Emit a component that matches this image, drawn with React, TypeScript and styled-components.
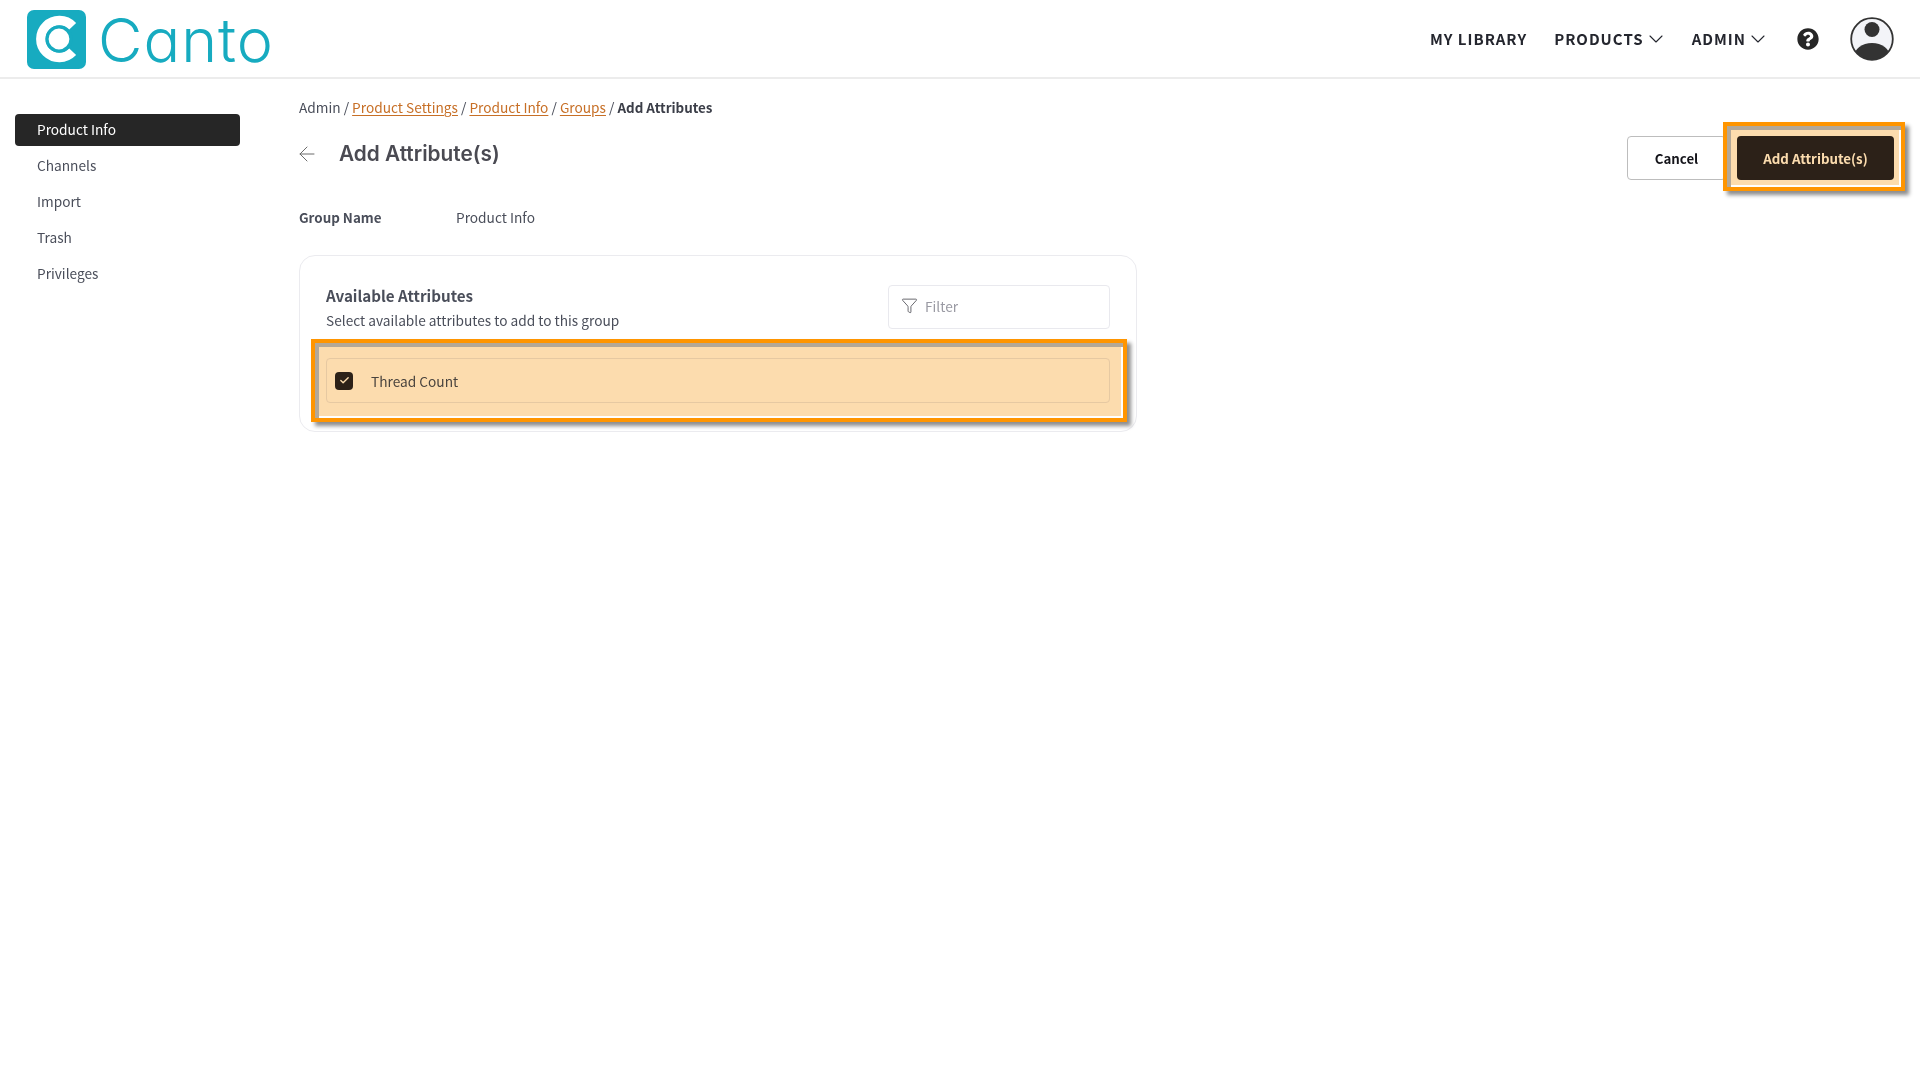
import React from 'react';
import styled, { createGlobalStyle } from 'styled-components';
import { ArrowLeft, Check, ChevronDown, Funnel } from 'lucide-react';
import { FaQuestionCircle } from 'react-icons/fa';

const GlobalStyle = createGlobalStyle`
  html, body {
    margin: 0;
    padding: 0;
    background: #ffffff;
  }
  body {
    font-family: "Noto Sans CJK JP", "Noto Sans", sans-serif;
    color: #4a4e5a;
  }
  * {
    box-sizing: border-box;
  }
`;

const Page = styled.div`
  width: 1920px;
  height: 1080px;
  overflow: hidden;
  display: flex;
  flex-direction: column;
`;

const TopBar = styled.header`
  height: 79px;
  flex-shrink: 0;
  display: flex;
  align-items: center;
  justify-content: space-between;
  padding: 0 26px 0 27px;
  border-bottom: 2px solid #ececec;
`;

const LogoLink = styled.a`
  display: flex;
  align-items: center;
  gap: 12px;
  padding-top: 2px;
  text-decoration: none;
`;

const Wordmark = styled.span`
  font-family: Inter, sans-serif;
  font-weight: 300;
  font-size: 61px;
  line-height: 60px;
  letter-spacing: 1px;
  font-feature-settings: "cv11";
  color: #17abc0;
`;

const TopNav = styled.nav`
  display: flex;
  align-items: center;
`;

const NavItem = styled.a<{ $gap: number }>`
  display: flex;
  align-items: center;
  margin-right: ${(p) => p.$gap}px;
  font-size: 15px;
  line-height: 24px;
  font-weight: 600;
  letter-spacing: 1px;
  color: #24262e;
  cursor: pointer;
`;

const HelpButton = styled.span`
  display: flex;
  font-size: 22px;
  color: #262626;
  margin-right: 31px;
`;

const Content = styled.div`
  flex: 1;
  display: flex;
`;

const Sidebar = styled.aside`
  width: 299px;
  flex-shrink: 0;
  padding: 35px 59px 0 15px;
  display: flex;
  flex-direction: column;
  gap: 4px;
`;

const SideItem = styled.a<{ $active?: boolean }>`
  height: 32px;
  display: flex;
  align-items: center;
  padding: 0 0 2px 22px;
  border-radius: 4px;
  font-size: 13.7px;
  line-height: 20px;
  background: ${(p) => (p.$active ? '#262626' : 'transparent')};
  color: ${(p) => (p.$active ? '#ffffff' : '#4a4e5a')};
  cursor: pointer;
`;

const Main = styled.main`
  flex: 1;
  padding: 17px 26px 0 0;
`;

const Breadcrumb = styled.div`
  font-size: 13.7px;
  line-height: 22px;
  color: #4a4e5a;

  a {
    color: #c76f26;
    text-decoration: underline;
    text-underline-offset: 2px;
    text-decoration-thickness: 1px;
  }

  strong {
    font-weight: 600;
    font-size: 13.4px;
    color: #3b3e48;
  }
`;

const TitleRow = styled.div`
  height: 70px;
  margin-top: 16px;
  display: flex;
  align-items: flex-start;
  justify-content: space-between;
`;

const TitleGroup = styled.div`
  display: flex;
  align-items: center;
  height: 40px;
  gap: 20px;
  margin-left: -4px;
  color: #6b6b6b;
`;

const Title = styled.h1`
  margin: 0;
  font-family: Inter, sans-serif;
  font-size: 20.8px;
  line-height: 30px;
  font-weight: 600;
  color: #4a4a52;
`;

const Actions = styled.div`
  display: flex;
  gap: 11px;
  margin-top: 2px;
`;

const BaseButton = styled.button`
  height: 44px;
  border-radius: 4px;
  font-family: inherit;
  font-size: 13.3px;
  font-weight: 600;
  cursor: pointer;
`;

const CancelButton = styled(BaseButton)`
  width: 99px;
  background: #ffffff;
  border: 1px solid #bdbdbd;
  color: #14141a;
`;

const AddButton = styled(BaseButton)`
  width: 157px;
  background: #2c2622;
  border: none;
  color: #ffffff;
`;

const Highlighted = styled.div`
  position: relative;
`;

/* the orange tutorial callout that sits on top of a control */
const Callout = styled.div<{ $l: number; $t: number; $r: number; $b: number }>`
  position: absolute;
  left: ${(p) => p.$l}px;
  top: ${(p) => p.$t}px;
  right: ${(p) => p.$r}px;
  bottom: ${(p) => p.$b}px;
  border: 4px solid #ff9500;
  box-shadow: 4px 4px 4px rgba(0, 0, 0, 0.45);
  pointer-events: none;

  &::before {
    content: '';
    position: absolute;
    inset: 0;
    background: #fcdcae;
    mix-blend-mode: multiply;
    border-style: solid;
    border-width: 4px 0 0 4px;
    border-color: #b3a898;
    box-shadow: inset -2px -2px 0 #ffffff;
  }
`;

const GroupRow = styled.div`
  display: flex;
  align-items: center;
  height: 26px;
  font-size: 13.7px;
  line-height: 22px;
`;

const GroupLabel = styled.span`
  width: 157px;
  font-size: 13.4px;
  font-weight: 600;
  color: #4a4e5a;
`;

const Card = styled.section`
  width: 838px;
  height: 177px;
  margin-top: 25px;
  padding: 26px 26px 0 26px;
  border: 1px solid #ebebef;
  border-radius: 16px;
`;

const CardHead = styled.div`
  display: flex;
  justify-content: space-between;
  height: 76px;
`;

const CardTitle = styled.h2`
  margin: 0;
  font-size: 15.2px;
  line-height: 27px;
  font-weight: 600;
  color: #4a4e5a;
`;

const CardSub = styled.p`
  margin: 0;
  font-size: 13.7px;
  line-height: 22px;
  color: #4a4e5a;
`;

const FilterBox = styled.label`
  width: 222px;
  height: 44px;
  margin-top: 3px;
  display: flex;
  align-items: center;
  gap: 7px;
  padding: 0 0 3px 12px;
  border: 1px solid #e9e9ee;
  border-radius: 4px;
  color: #55555c;
`;

const FilterInput = styled.input`
  flex: 1;
  min-width: 0;
  border: none;
  outline: none;
  padding: 0;
  background: transparent;
  font-family: inherit;
  font-size: 13.7px;
  color: #4a4e5a;

  &::placeholder {
    color: #9a9aa3;
  }
`;

const AttributeRow = styled.div`
  height: 45px;
  display: flex;
  align-items: center;
  gap: 18px;
  padding-left: 8px;
  border: 1px solid #e9e9ee;
  border-radius: 4px;
  font-size: 13.7px;
  color: #4a4e5a;
`;

const CheckBox = styled.span`
  width: 18px;
  height: 18px;
  display: flex;
  align-items: center;
  justify-content: center;
  border-radius: 4px;
  background: #2c2622;
  color: #ffffff;
`;

const CantoMark = () => (
  <svg width="59" height="59" viewBox="0 0 59 59">
    <rect width="59" height="59" rx="7" fill="#17abc0" />
    <path d="M45.7 16.2 A18.5 18.5 0 1 0 45.7 41.8" fill="none" stroke="#fff" strokeWidth="9.5" />
    <circle cx="32" cy="29" r="12" fill="#fff" stroke="#17abc0" strokeWidth="3.2" />
  </svg>
);

const Avatar = () => (
  <svg width="44" height="44" viewBox="0 0 44 44">
    <defs>
      <clipPath id="avatarClip">
        <circle cx="22" cy="22" r="20.5" />
      </clipPath>
    </defs>
    <circle cx="22" cy="22" r="20.5" fill="#f3f4f8" />
    <circle cx="22" cy="12.5" r="7.5" fill="#333333" />
    <ellipse cx="22" cy="40" rx="18" ry="14" fill="#333333" clipPath="url(#avatarClip)" />
    <circle cx="22" cy="22" r="20.8" fill="none" stroke="#333333" strokeWidth="1.8" />
  </svg>
);

const sideLinks = ['Product Info', 'Channels', 'Import', 'Trash', 'Privileges'];

export default function App() {
  return (
    <Page>
      <GlobalStyle />
      <TopBar>
        <LogoLink>
          <CantoMark />
          <Wordmark>Canto</Wordmark>
        </LogoLink>
        <TopNav>
          <NavItem $gap={27}>MY LIBRARY</NavItem>
          <NavItem $gap={24}>
            PRODUCTS <ChevronDown size={24} strokeWidth={1.1} />
          </NavItem>
          <NavItem $gap={27}>
            ADMIN <ChevronDown size={24} strokeWidth={1.1} />
          </NavItem>
          <HelpButton>
            <FaQuestionCircle />
          </HelpButton>
          <Avatar />
        </TopNav>
      </TopBar>
      <Content>
        <Sidebar>
          {sideLinks.map((label, i) => (
            <SideItem key={label} $active={i === 0}>
              {label}
            </SideItem>
          ))}
        </Sidebar>
        <Main>
          <Breadcrumb>
            Admin / <a>Product Settings</a> / <a>Product Info</a> / <a>Groups</a> /{' '}
            <strong>Add Attributes</strong>
          </Breadcrumb>
          <TitleRow>
            <TitleGroup>
              <ArrowLeft size={24} strokeWidth={1} />
              <Title>Add Attribute(s)</Title>
            </TitleGroup>
            <Actions>
              <CancelButton>Cancel</CancelButton>
              <Highlighted>
                <AddButton>Add Attribute(s)</AddButton>
                <Callout $l={-14} $t={-14} $r={-11} $b={-11} />
              </Highlighted>
            </Actions>
          </TitleRow>
          <GroupRow>
            <GroupLabel>Group Name</GroupLabel>
            Product Info
          </GroupRow>
          <Card>
            <CardHead>
              <div>
                <CardTitle>Available Attributes</CardTitle>
                <CardSub>Select available attributes to add to this group</CardSub>
              </div>
              <FilterBox>
                <Funnel size={17} strokeWidth={1.25} />
                <FilterInput placeholder="Filter" />
              </FilterBox>
            </CardHead>
            <Highlighted>
              <AttributeRow>
                <CheckBox>
                  <Check size={11} strokeWidth={3} />
                </CheckBox>
                Thread Count
              </AttributeRow>
              <Callout $l={-15} $t={-19} $r={-17} $b={-19} />
            </Highlighted>
          </Card>
        </Main>
      </Content>
    </Page>
  );
}
